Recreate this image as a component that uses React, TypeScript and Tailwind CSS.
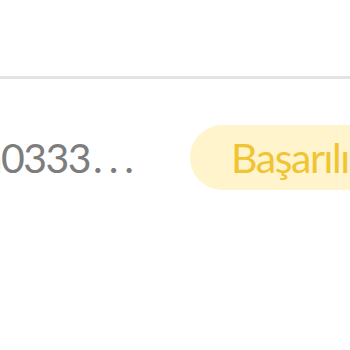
export default function App() {
  return (
    <div className="w-[350px] h-[350px] overflow-hidden bg-white font-['Lato',sans-serif]">
      <div className="h-[76px]" />
      <div className="h-[3px] w-[400px] bg-[#e3e3e3]" />
      <div className="flex items-center h-[163px] -mt-[3px] whitespace-nowrap">
        <div className="w-[190px] shrink-0 overflow-hidden">
          <span className="block -ml-[18px] text-[41px] leading-none tracking-[-1.5px] text-[#7d7d7d]">
            a0333<span className="ml-[3px] tracking-[6px]">...</span>
          </span>
        </div>
        <div className="shrink-0 h-[65px] rounded-full bg-[#fff4cc] pl-[41px] pr-[30px] flex items-center text-[41px] tracking-[-1.4px] text-[#f0c433]">
          Başarılı
        </div>
      </div>
    </div>
  )
}
